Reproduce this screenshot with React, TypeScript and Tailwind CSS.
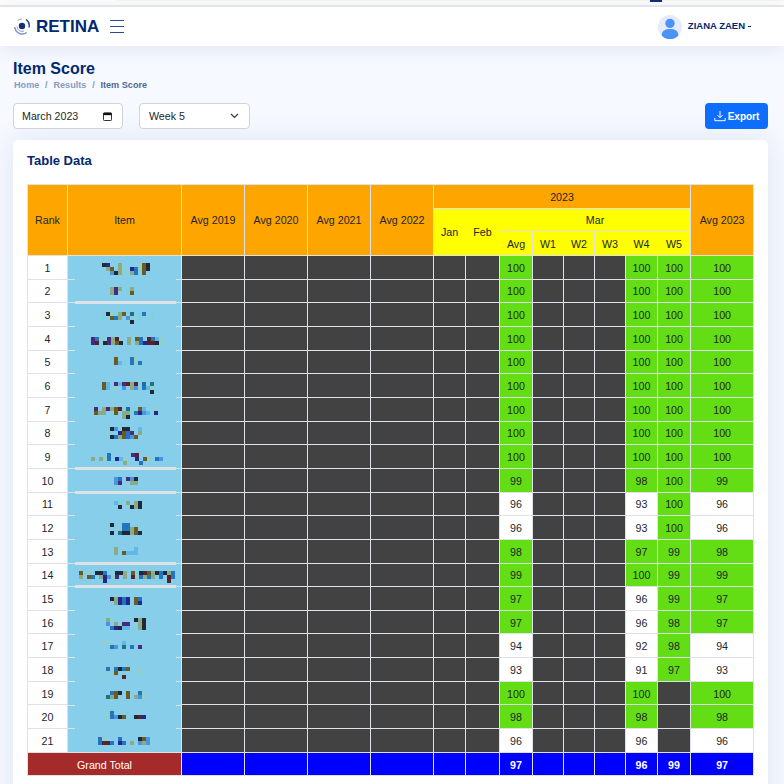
import React from "react";

const C: Record<string, string> = {
  k: "#22283a", n: "#25288a", b: "#2475c0", l: "#4a94e0", s: "#5fb8e8", t: "#7fd0e0",
  g: "#8aab84", o: "#6b5a22", p: "#4a2a7a", m: "#5a2228", e: "#1f7088", a: "#90d0c8",
};

// each item: [page x of the first block, page y of the first line, lines of 4px blocks]
const ITEMS: [number, number, string[]][] = [
  [102, 263, ["kn..g....aok", ".go.ga.nbaok", "..lkga.gb.o."]],
  [110, 288, ["gpg.tg", "gp..to"]],
  [102, 312, ["tkatgo.e.tb.t", "t.obg.la.t..t", ".......k"]],
  [91, 337, ["pba.pgm..g.ob.mbsa", "pm.kpgok.g.gbnmmka"]],
  [114, 358, ["o...ba", "ost.bab"]],
  [102, 382, ["os.pspmgm.e.e", "os.a.l.gl.bsa", "............k"]],
  [94, 407, ["p.gpgom.e.tos..a", "ogg..o.gg.bnls.n", ".......gk"]],
  [110, 428, ["kl.kk..s", "t.nobp.g", "kbgoblo"]],
  [91, 453, ["....b.....pm", "g.gab.nsa..n.oa.bl", "........g...b"]],
  [114, 477, ["lb.plk", "lp..gg"]],
  [114, 502, ["st.g.gk", ".k..kgk"]],
  [110, 523, ["k..bb", "..abbgo", "k.ekkgok"]],
  [114, 547, ["g....s", "g.osss"]],
  [79, 572, ["o.a.kkb..kkg.o.kmogkbkgb", "g.ob.gnlap.g.mabgbg.b.mb", "......n...............m"]],
  [110, 597, ["kgnbn.ob", ".gnbn.on"]],
  [106, 618, ["g......kgk", "l.g.pp..gk", ".bnkss..gk"]],
  [102, 642, ["aa...s", "..bl.e.b.p"]],
  [106, 667, ["b.bkbo..a", ".ao.t...a", "....m"]],
  [106, 691, [".bok.o..ba", "ego..o.gla"]],
  [106, 712, ["ab", "ablko.tkmn"]],
  [98, 737, ["ba...b....kol", "bmmb.nb.g.lgl"]],
];

const THICK = new Set([2, 9, 10, 13, 14]);

const rows: { v: string; w4: string; w5: string; t: string }[] = [
  { v: "100", w4: "100", w5: "100", t: "100" },
  { v: "100", w4: "100", w5: "100", t: "100" },
  { v: "100", w4: "100", w5: "100", t: "100" },
  { v: "100", w4: "100", w5: "100", t: "100" },
  { v: "100", w4: "100", w5: "100", t: "100" },
  { v: "100", w4: "100", w5: "100", t: "100" },
  { v: "100", w4: "100", w5: "100", t: "100" },
  { v: "100", w4: "100", w5: "100", t: "100" },
  { v: "100", w4: "100", w5: "100", t: "100" },
  { v: "99", w4: "98", w5: "100", t: "99" },
  { v: "96", w4: "93", w5: "100", t: "96" },
  { v: "96", w4: "93", w5: "100", t: "96" },
  { v: "98", w4: "97", w5: "99", t: "98" },
  { v: "99", w4: "100", w5: "99", t: "99" },
  { v: "97", w4: "96", w5: "99", t: "97" },
  { v: "97", w4: "96", w5: "98", t: "97" },
  { v: "94", w4: "92", w5: "98", t: "94" },
  { v: "93", w4: "91", w5: "97", t: "93" },
  { v: "100", w4: "100", w5: "", t: "100" },
  { v: "98", w4: "98", w5: "", t: "98" },
  { v: "96", w4: "96", w5: "", t: "96" },
];

const widths = [40, 114, 63, 63, 63, 63, 32, 34, 33, 31, 31, 31, 32, 33, 63];

function score(v: string) {
  if (v === "") return "bg-[#424242]";
  return Number(v) >= 97 ? "bg-[#63dd14]" : "bg-white";
}

function ItemCell({ index }: { index: number }) {
  const [px, py, lines] = ITEMS[index];
  const n = index + 1;
  const top = Math.round(256 + 23.67 * index);
  const x = px - 68;
  const y = py - top;
  return (
    <td className="relative border-x border-[#dee2e6] bg-[#87ceeb] p-0" style={{ zIndex: 40 - index }}>
      <svg width="113" height="23" className="block overflow-visible" shapeRendering="crispEdges" aria-hidden="true">
        {lines.map((line, ly) =>
          line.split("").map((ch, lx) =>
            C[ch] ? <rect key={`${ly}-${lx}`} x={x + lx * 4} y={y + ly * 4} width="4" height="4" fill={C[ch]} /> : null,
          ),
        )}
        {n < 21 && <rect x="0" y="23" width="7" height="1" fill="#dee2e6" />}
        {n < 21 && <rect x="108" y="23" width="5" height="1" fill="#dee2e6" />}
        {THICK.has(n) && <rect x="7" y="22" width="101" height="3" fill="#dee2e6" />}
      </svg>
    </td>
  );
}

function Logo() {
  return (
    <svg width="17" height="17" viewBox="0 0 17 17" fill="none" aria-hidden="true">
      <circle cx="8" cy="8" r="3.2" fill="#12306f" />
      <path d="M0.8 9a7.5 7.5 0 0 0 12 5.5" stroke="#7f96cc" strokeWidth="1.5" />
      <path d="M3 8.5a5 5 0 0 0 7 4.5" stroke="#8aa0d0" strokeWidth="1" />
      <path d="M3.5 2.5a6 6 0 0 1 4.5-1.5" stroke="#90a4d4" strokeWidth="1" />
      <path d="M12 1.5a7.5 7.5 0 0 1 3 8" stroke="#2a4a90" strokeWidth="1.4" />
    </svg>
  );
}

export default function App() {
  const th = "border border-[#dee2e6] p-0 pt-px font-normal text-center align-middle";
  const td = "border border-[#dee2e6] p-0 pt-px text-center align-middle";
  return (
    <div className="relative h-[784px] w-[784px] overflow-hidden bg-[#f6f9ff] font-['Liberation_Sans',Arial,sans-serif] text-[#212529]">
      <div className="absolute left-[117px] top-0 h-px w-[667px] bg-[#f6f6f6]" />
      <div className="absolute left-[650px] top-0 h-[2px] w-[12px] bg-[#12306f]" />
      <div className="h-[5px] bg-white" />
      <header className="relative z-10 flex h-[41px] items-center justify-between border-t-2 border-[#e4e4e4] bg-white pl-[14px] pr-[33px] shadow-[0_2px_20px_rgba(1,41,112,0.1)]">
        <div className="flex items-center">
          <Logo />
          <span className="ml-[5px] text-[17px] font-bold text-[#012970]">RETINA</span>
          <svg width="16" height="14" viewBox="0 0 16 14" className="ml-[10px] mt-[-2px]" aria-hidden="true">
            <path d="M1 1.5h14M1 7.5h14M1 13.5h14" stroke="#2a4f8f" strokeWidth="1" />
          </svg>
        </div>
        <div className="flex items-center gap-[6px]">
          <svg width="24" height="24" viewBox="0 0 23 23" aria-hidden="true">
            <circle cx="11.5" cy="11.5" r="11.5" fill="#e6ebfa" />
            <circle cx="11.5" cy="8" r="4.5" fill="#4a94f5" />
            <path d="M3.5 20c0-5 3.5-6.5 8-6.5s8 1.5 8 6.5a11.5 11.5 0 0 1-16 0z" fill="#4a94f5" />
          </svg>
          <span className="text-[9.5px] font-bold text-[#012970]">ZIANA ZAEN</span>
          <span className="ml-[-3px] h-px w-[3px] bg-[#012970]" />
        </div>
      </header>

      <main className="pl-[13px] pr-[16px] pt-[14px]">
        <h1 className="text-[16px] leading-[18px] font-bold text-[#012970]">Item Score</h1>
        <div className="ml-px mt-[1px] flex gap-[5.75px] text-[9.14px] leading-[12px] font-bold text-[#899bbd]">
          <span>Home</span>
          <span>/</span>
          <span>Results</span>
          <span>/</span>
          <span className="text-[#51678f]">Item Score</span>
        </div>
        <div className="mt-[12px] flex items-center justify-between">
          <div className="flex gap-[16px]">
            <div className="flex h-[26px] w-[110px] items-center justify-between rounded-[4px] border border-[#ced4da] bg-white pl-[8px] pr-[10px] text-[10.67px]">
              March 2023
              <svg width="9" height="9" viewBox="0 0 10 10" aria-hidden="true">
                <rect x="0.5" y="1" width="9" height="8.5" rx="1" fill="none" stroke="#111" />
                <rect x="0.5" y="1" width="9" height="2.5" fill="#111" />
              </svg>
            </div>
            <div className="flex h-[26px] w-[111px] items-center justify-between rounded-[4px] border border-[#ced4da] bg-white pl-[9px] pr-[10px] text-[10.67px]">
              Week 5
              <svg width="9" height="6" viewBox="0 0 9 6" aria-hidden="true">
                <path d="M1 1l3.5 3.5L8 1" fill="none" stroke="#343a40" strokeWidth="1.2" />
              </svg>
            </div>
          </div>
          <button className="flex h-[26px] w-[63px] items-center justify-center gap-[2px] rounded-[4px] bg-[#0d6efd] text-[10px] font-bold text-white">
            <svg width="12" height="12" viewBox="0 0 12 12" fill="none" aria-hidden="true">
              <path d="M6 1v6.5M3.5 5.2 6 7.7l2.5-2.5M.8 8v2.7h10.4V8" stroke="#fff" strokeWidth="1" />
            </svg>
            Export
          </button>
        </div>

        <section className="mt-[11px] h-[700px] w-[755px] rounded-[5px] bg-white pl-[14px] pt-[13px] shadow-[0_0_30px_rgba(1,41,112,0.1)]">
          <h2 className="text-[13px] leading-[15px] font-bold text-[#012970]">Table Data</h2>
          <table className="mt-[16px] table-fixed border-collapse text-[10.67px] text-[#212529]" style={{ width: 727 }}>
            <colgroup>
              {widths.map((w, i) => (
                <col key={i} style={{ width: w }} />
              ))}
            </colgroup>
            <thead>
              <tr className="h-[23.67px]">
                <th rowSpan={3} className={`${th} bg-[#ffa500]`}>Rank</th>
                <th rowSpan={3} className={`${th} bg-[#ffa500]`}>Item</th>
                {["Avg 2019", "Avg 2020", "Avg 2021", "Avg 2022"].map((h) => (
                  <th key={h} rowSpan={3} className={`${th} bg-[#ffa500]`}>{h}</th>
                ))}
                <th colSpan={8} className={`${th} bg-[#ffa500]`}>2023</th>
                <th rowSpan={3} className={`${th} bg-[#ffa500]`}>Avg 2023</th>
              </tr>
              <tr className="h-[23.67px]">
                <th rowSpan={2} className={`${th} bg-[#ffff00]`}>Jan</th>
                <th rowSpan={2} className={`${th} bg-[#ffff00]`}>Feb</th>
                <th colSpan={6} className={`${th} bg-[#ffff00]`}>Mar</th>
              </tr>
              <tr className="h-[23.67px]">
                {["Avg", "W1", "W2", "W3", "W4", "W5"].map((h) => (
                  <th key={h} className={`${th} bg-[#ffff00]`}>{h}</th>
                ))}
              </tr>
            </thead>
            <tbody>
              {rows.map((r, i) => (
                <tr key={i} className="h-[23.67px]">
                  <td className={`${td} bg-white`}>{i + 1}</td>
                  <ItemCell index={i} />
                  {Array.from({ length: 6 }, (_, k) => (
                    <td key={k} className={`${td} bg-[#424242]`} />
                  ))}
                  <td className={`${td} ${score(r.v)}`}>{r.v}</td>
                  <td className={`${td} bg-[#424242]`} />
                  <td className={`${td} bg-[#424242]`} />
                  <td className={`${td} bg-[#424242]`} />
                  <td className={`${td} ${score(r.w4)}`}>{r.w4}</td>
                  <td className={`${td} ${score(r.w5)}`}>{r.w5}</td>
                  <td className={`${td} ${score(r.t)}`}>{r.t}</td>
                </tr>
              ))}
              <tr className="h-[23.67px] font-bold text-white">
                <td colSpan={2} className={`${td} bg-[#a52a2a] font-normal`}>Grand Total</td>
                {Array.from({ length: 6 }, (_, k) => (
                  <td key={k} className={`${td} bg-[#0000ff]`} />
                ))}
                <td className={`${td} bg-[#0000ff]`}>97</td>
                <td className={`${td} bg-[#0000ff]`} />
                <td className={`${td} bg-[#0000ff]`} />
                <td className={`${td} bg-[#0000ff]`} />
                <td className={`${td} bg-[#0000ff]`}>96</td>
                <td className={`${td} bg-[#0000ff]`}>99</td>
                <td className={`${td} bg-[#0000ff]`}>97</td>
              </tr>
            </tbody>
          </table>
        </section>
      </main>
    </div>
  );
}
